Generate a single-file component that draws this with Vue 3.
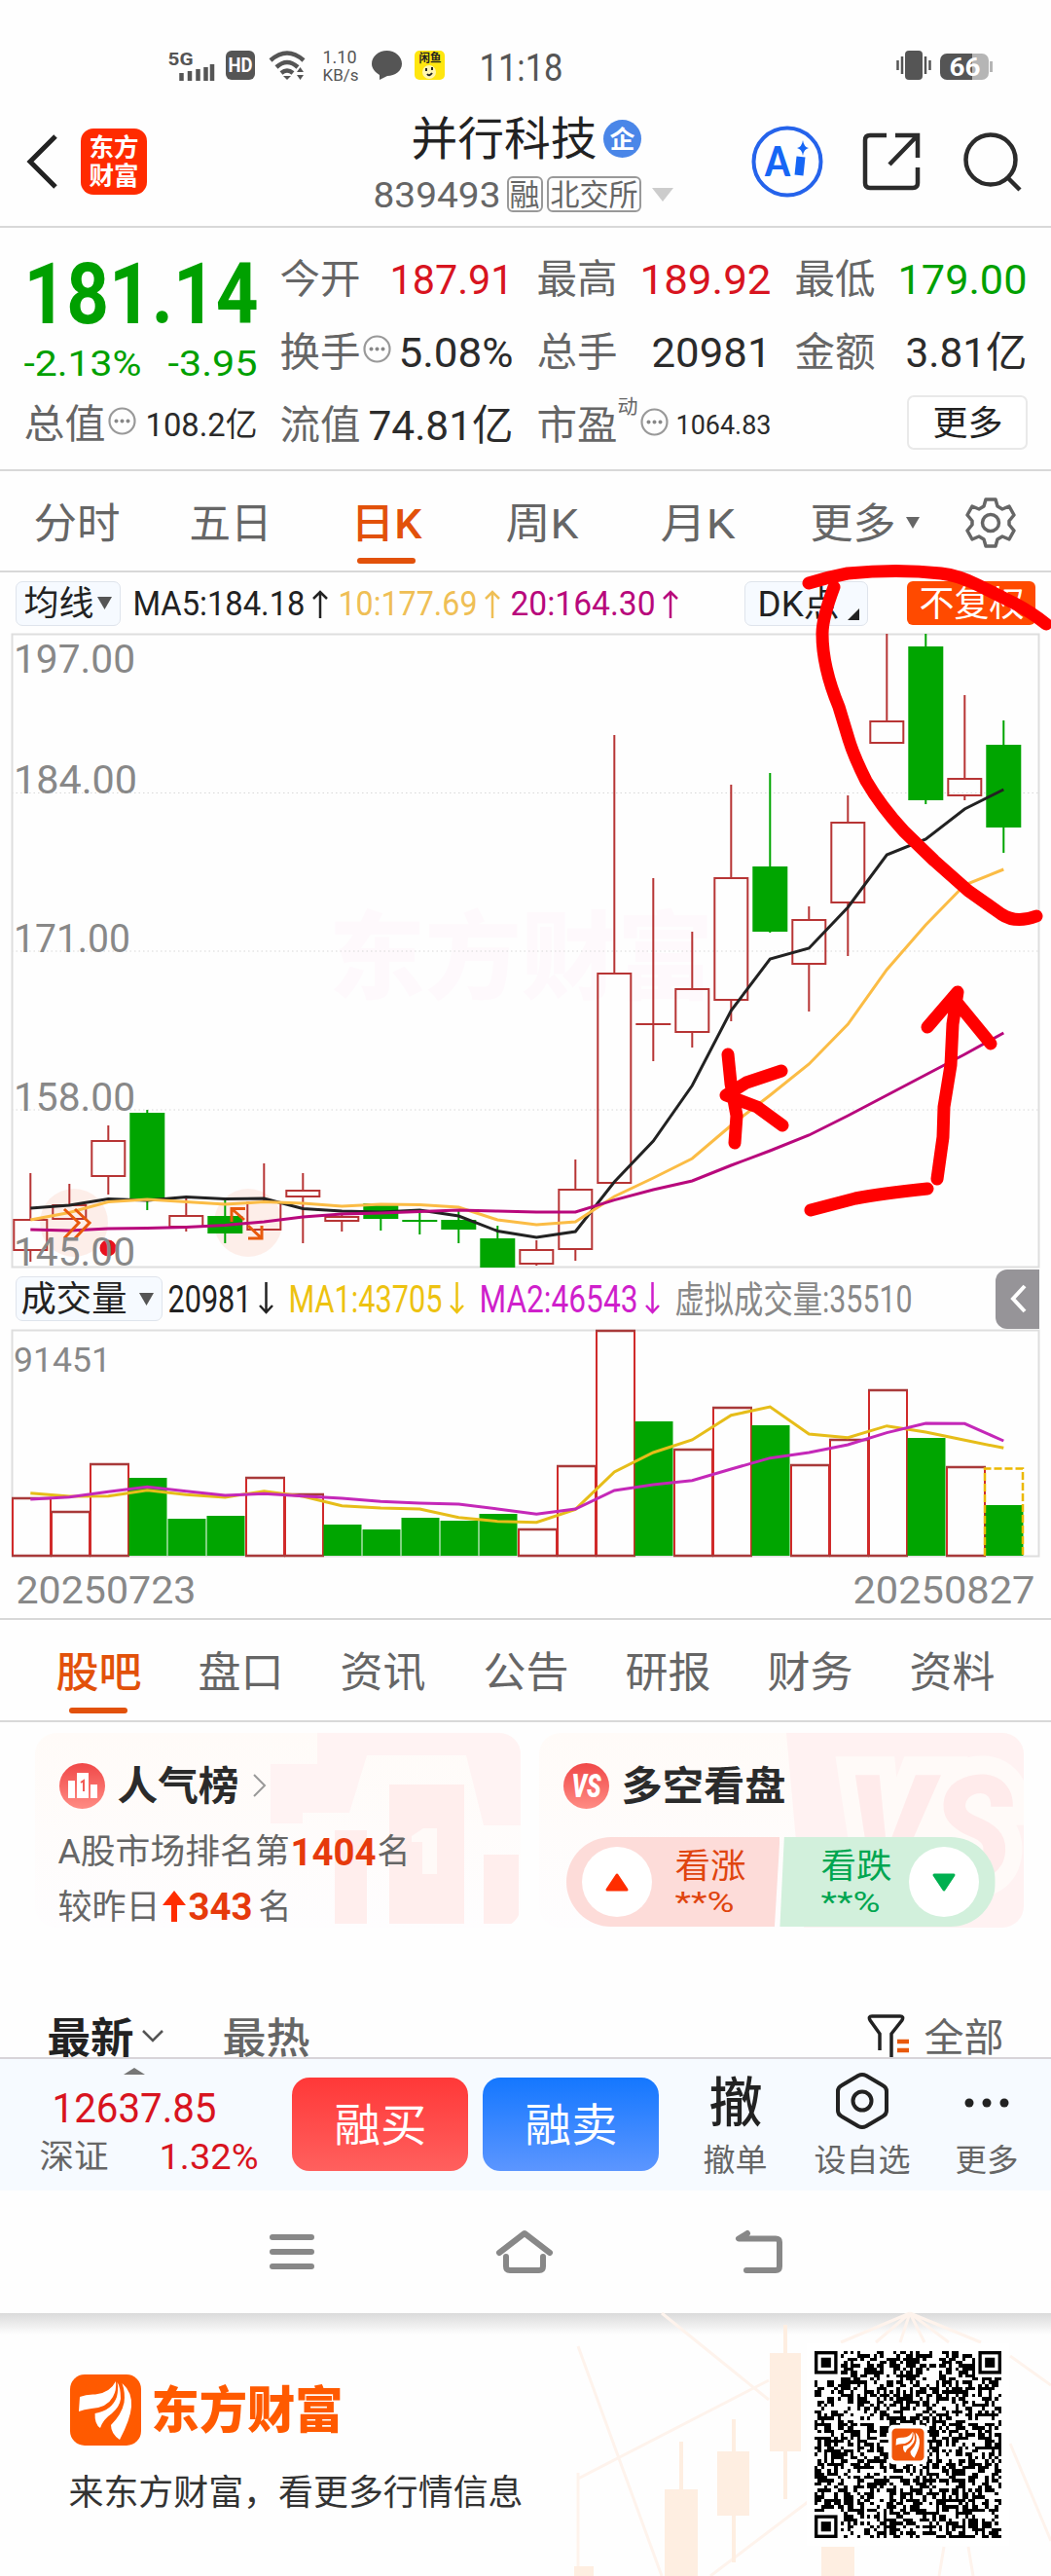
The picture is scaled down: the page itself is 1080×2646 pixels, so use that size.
<template>
    <div class="screen">
        <!-- Phone status bar -->
        <div class="status">
            <div class="signal">
                <fit-text class="bold" text="5G" :w="23" :s="18" />
                <svg width="36" height="17"><path d="M2.500 17V9M11 17V7M19.500 17V5M27.500 17V3M34 17V0" stroke="#555" stroke-width="4.500" /></svg>
            </div>
            <div class="hd"><fit-text class="bold" text="HD" :w="22" :s="20" /></div>
            <svg class="wifi" width="38" height="30" fill="none" stroke="#555" stroke-width="4.500">
                <path d="M1 10Q18 -5 35 10M7 17Q18 7 29 17M12 23Q18 18 24 23" />
                <path d="M14 26L18 30L22 26ZM28 22L31.500 17L35 22ZM28 25L31.500 30L35 25Z" fill="#555" stroke="none" />
            </svg>
            <div class="speed">
                <fit-text text="1.10" :w="32" :s="18" />
                <fit-text text="KB/s" :w="34" :s="17" />
            </div>
            <svg class="bubble" width="31" height="30"><path d="M15.500 0C24 0 31 6 31 13.500S24 26 16 26L8 30V25C3 22 0 18 0 13.500C0 6 7 0 15.500 0Z" fill="#555" /></svg>
            <div class="fish">
                <fit-text class="bold" text="闲鱼" :w="20" :s="12" />
                <svg width="31" height="16"><circle cx="15" cy="8" r="7" fill="#fff6b0" /><path d="M12 4V7M18 3V6M13 10Q15 13 18 9" stroke="#222" stroke-width="2" fill="none" /></svg>
            </div>
            <fit-text class="clock" text="11:18" :w="83" :s="38" />
            <svg class="vibrate" width="36" height="30" stroke="#555" stroke-width="2.500"><rect x="9" y="0" width="18" height="30" rx="4" fill="#555" stroke="none" /><path d="M6 6V24M1.500 10V20M30 6V24M34.500 10V20" /></svg>
            <div class="battery"><fit-text class="bold" text="66" :w="29" :s="25" /></div>
        </div>

        <!-- Stock header -->
        <header class="header">
            <svg width="32" height="54" fill="none" stroke="#222" stroke-width="5"><path d="M30 1L4 27L30 53" /></svg>
            <div class="brand">
                <fit-text text="东方" :w="48" :s="26" />
                <fit-text text="财富" :w="48" :s="26" />
            </div>
            <div class="title">
                <div class="name">
                    <fit-text text="并行科技" :w="188" :s="47" />
                    <span class="qi"><fit-text class="bold" text="企" :w="23" :s="25" /></span>
                </div>
                <div class="code">
                    <fit-text text="839493" :w="128" :s="37" />
                    <span class="tag t1"><fit-text text="融" :w="28" :s="31" /></span>
                    <span class="tag t2"><fit-text text="北交所" :w="87" :s="31" /></span>
                    <svg class="drop" width="22" height="14"><path d="M0 0H22L11 14Z" fill="#ccc" /></svg>
                </div>
            </div>
            <svg class="ai" width="74" height="74">
                <circle cx="37" cy="37" r="34.500" fill="none" stroke="#2563eb" stroke-width="4" />
                <text x="14" y="52" font-size="42" textLength="26" lengthAdjust="spacingAndGlyphs" fill="#1666f5" class="ai-text">A</text>
                <path d="M51 32L49 51" stroke="#1666f5" stroke-width="9" />
                <path d="M53 15Q54 22 59 23Q54 24 53 31Q52 24 47 23Q52 22 53 15Z" fill="#1666f5" />
            </svg>
            <svg class="share" width="60" height="60" fill="none" stroke="#2b2b2b" stroke-width="4.500"><path d="M25 3H8Q3 3 3 8V52Q3 57 8 57H52Q57 57 57 52V36M34 3H57V26M56 4L28 33" /></svg>
            <svg class="search" width="60" height="60" fill="none" stroke="#2b2b2b" stroke-width="4.500"><circle cx="28" cy="28" r="25.500" /><path d="M46 47L58 59" /></svg>
        </header>

        <!-- Quote panel -->
        <section class="quote">
            <div class="price">
                <fit-text class="big" text="181.14" :w="238" :s="88" />
                <div class="change">
                    <fit-text text="-2.13%" :w="118" :s="37" />
                    <fit-text text="-3.95" :w="89" :s="37" />
                </div>
                <div class="pair last">
                    <fit-text text="总值" :w="81" :s="41" />
                    <info-dot />
                    <fit-text class="val" text="108.2亿" :w="112" :s="34" />
                </div>
            </div>
            <div class="stats">
                <div v-for="s in stats" :key="s.label" class="pair">
                    <fit-text :text="s.label" :w="80" :s="41" />
                    <fit-text v-if="s.sup" class="sup" :text="s.sup" :w="18" :s="20" />
                    <info-dot v-if="s.dot" />
                    <fit-text class="val" :class="s.color" :text="s.value" :w="s.w" :s="s.size || 43" />
                </div>
                <button class="more-btn"><fit-text text="更多" :w="69" :s="35" /></button>
            </div>
        </section>

        <!-- Period tabs -->
        <nav class="periods">
            <div v-for="(p, i) in periods" :key="p.text" class="period" :class="{ active: i === 2 }">
                <fit-text :text="p.text" :w="p.w" :s="43" />
            </div>
            <svg class="tri" width="14" height="12"><path d="M0 0H14L7 12Z" fill="#666" /></svg>
            <svg class="gear" width="52" height="52" fill="none" stroke="#666" stroke-width="3.500" stroke-linejoin="round">
                <path d="M21 2H31L33 9L38 12L45 9L50 18L45 24V28L50 34L45 43L38 40L33 43L31 50H21L19 43L14 40L7 43L2 34L7 28V24L2 18L7 9L14 12L19 9Z" /><circle cx="26" cy="26" r="8.500" />
            </svg>
        </nav>

        <!-- Moving average legend -->
        <div class="legend">
            <div class="pill"><fit-text text="均线" :w="69" :s="35" /><svg width="15" height="13"><path d="M0 0H15L7.500 13Z" fill="#555" /></svg></div>
            <div v-for="m in averages" :key="m.text" class="ma" :class="m.cls">
                <fit-text :text="m.text" :w="m.w" :s="35" />
                <svg width="16" height="30" fill="none" stroke="currentColor" stroke-width="2.500"><path d="M8 30V3M1 10L8 3L15 10" /></svg>
            </div>
            <div class="pill dk"><fit-text text="DK点" :w="81" :s="36" /><svg width="12" height="12"><path d="M12 0V12H0Z" fill="#222" /></svg></div>
            <div class="fuquan"><fit-text text="不复权" :w="105" :s="36" /></div>
        </div>

        <!-- Candlestick chart -->
        <svg class="chart" width="1080" height="651" viewBox="0 651 1080 651">
            <text class="watermark" x="338" y="1018" textLength="395" lengthAdjust="spacingAndGlyphs">东方财富</text>
            <path d="M12 814.500H1067M12 977H1067M12 1140H1067" stroke="#d8d8d8" stroke-dasharray="1.500 3" />
            <rect x="12.500" y="651.500" width="1055" height="650" fill="none" stroke="#dedede" stroke-width="2" />
            <circle cx="76" cy="1256" r="35" class="halo" />
            <circle cx="255" cy="1256" r="35" class="halo" />
            <g v-for="(c, i) in candles" :key="i" :stroke="c[4] ? '#00a500' : '#b73535'" stroke-width="2">
                <path :d="wick(c, i)" />
                <rect v-if="c[2] > c[1]" :x="cx(i) - 17" :y="c[1]" width="34" :height="c[2] - c[1]" :fill="c[4] ? '#00a500' : 'none'" />
                <path v-else :d="`M${cx(i) - 18} ${c[1]}h36`" />
            </g>
            <polyline v-for="l in maLines" :key="l.color" :points="points(l.ys)" fill="none" :stroke="l.color" stroke-width="3" />
            <g fill="none" stroke="#e8590c" stroke-width="3"><path d="M66 1242L81 1256L66 1272M77 1242L92 1256L77 1272" /><path d="M252 1241.500H238V1255M238 1241.500L251 1253M255 1272H269V1259M255 1259L269 1272" /></g>
            <circle cx="111" cy="1282" r="8.500" fill="#e8121d" />
            <text v-for="a in axis" :key="a.text" class="axis" x="14" :y="a.y" :textLength="a.w" lengthAdjust="spacingAndGlyphs">{{ a.text }}</text>
            <!-- Hand drawn marks -->
            <g class="marker">
                <path d="M831 599Q850 593 871 589Q922 584 967 589Q985 591 1005 601L1043 620Q1060 629 1075 641" />
                <path d="M857 603Q845 635 845 651Q845 685 862 726L872 759Q877 776 890 802Q905 828 929 854L960 884L995 915L1029 939Q1044 949 1065 941" />
                <path d="M748 1083L751 1113L757 1146L755 1174M803 1100L767 1112L746 1125L778 1137L804 1156" />
                <path d="M833 1243L879 1231Q905 1226 953 1221M963 1211L969 1168L970 1137L977 1094L979 1052L984 1019L953 1055M982 1028L1018 1072" />
            </g>
        </svg>

        <!-- Volume legend -->
        <div class="legend vol-legend">
            <div class="pill volp"><fit-text text="成交量" :w="106" :s="36" /><svg width="15" height="13"><path d="M0 0H15L7.500 13Z" fill="#555" /></svg></div>
            <div v-for="m in volumes" :key="m.text" class="ma" :class="m.cls">
                <fit-text :text="m.text" :w="m.w" :s="38" />
                <svg v-if="m.cls !== 'gray'" width="15" height="34" fill="none" stroke="currentColor" stroke-width="2.500"><path d="M7.500 0V31M1 24L7.500 31L14 24" /></svg>
            </div>
            <div class="collapse"><svg width="20" height="30" fill="none" stroke="#fff" stroke-width="4"><path d="M17 2L5 15L17 28" /></svg></div>
        </div>

        <!-- Volume chart -->
        <svg class="chart" width="1080" height="235" viewBox="0 1366 1080 235">
            <rect x="12.500" y="1366.500" width="1055" height="232" fill="none" stroke="#dedede" stroke-width="2" />
            <text class="axis vol-axis" x="14" y="1409" textLength="100" lengthAdjust="spacingAndGlyphs">91451</text>
            <g v-for="(v, i) in bars" :key="i">
                <rect v-if="v[1]" :x="12.500 + 40 * i" :y="v[0]" width="39" :height="1598 - v[0]" fill="#00a500" />
                <template v-else>
                    <rect :x="13 + 40 * i" :y="v[0]" width="39" :height="1598 - v[0]" fill="none" stroke="#d02a2a" stroke-width="2" />
                    <path :d="`M${12 + 40 * i} ${v[0]}h41M${12 + 40 * i} 1598h41`" stroke="#a83a3a" stroke-width="2.500" />
                </template>
            </g>
            <path d="M1012 1598V1508.500H1051V1598" fill="none" stroke="#ecb800" stroke-width="2.500" stroke-dasharray="8 3" />
            <polyline v-for="l in volLines" :key="l.color" :points="points(l.ys.map((y) => 1290 + y / 3))" fill="none" :stroke="l.color" stroke-width="3" />
        </svg>
        <div class="dates">
            <fit-text text="20250723" :w="182" :s="39" />
            <fit-text text="20250827" :w="184" :s="39" />
        </div>

        <!-- Info tabs -->
        <nav class="tabs">
            <div v-for="(t, i) in tabs" :key="t" class="tab" :class="{ active: i === 0 }"><fit-text :text="t" :w="85" :s="43" /></div>
        </nav>

        <!-- Cards -->
        <section class="cards">
            <div class="card">
                <svg class="art" width="260" height="200">
                    <path d="M51 0H260V95H222L204 23H102L84 82H36V93H3V32H51Z" fill="#fff3f3" />
                    <path d="M69 100H102V196H69ZM125 53H202V196H125ZM222 125H258V196H222Z" fill="#ffeeed" />
                    <path d="M148 106L160 98H174V145H159V112H148Z" fill="#fffaf8" />
                </svg>
                <div class="card-head">
                    <span class="round"><svg width="30" height="26" fill="#fff"><path d="M0 8H7V26H0ZM9 0H21V26H9ZM23 12H30V26H23Z" /><path d="M13 10L16 8V19" fill="none" stroke="#f15a55" stroke-width="2" /></svg></span>
                    <fit-text class="bold" text="人气榜" :w="122" :s="41" />
                    <svg class="chev" width="14" height="24" fill="none" stroke="#999" stroke-width="2"><path d="M1 1L12 12L1 23" /></svg>
                </div>
                <div class="line"><fit-text text="A股市场排名第" :w="235" :s="35" /><fit-text class="bold hot" text="1404" :w="85" :s="39" /><fit-text text="名" :w="31" :s="35" /></div>
                <div class="line second"><fit-text text="较昨日" :w="102" :s="35" /><svg class="up" width="24" height="32" fill="#ff2d00"><path d="M12 0L24 15H15V32H9V15H0Z" /></svg><fit-text class="bold hot" text="343" :w="63" :s="38" /><fit-text class="ming" text="名" :w="31" :s="35" /></div>
            </div>
            <div class="card">
                <svg class="art" width="260" height="200"><path d="M16 0H260V200H34Z" fill="#fff2f2" /><text class="art-vs" x="78" y="150" textLength="170" lengthAdjust="spacingAndGlyphs">VS</text></svg>
                <div class="card-head">
                    <span class="round"><fit-text class="vs" text="VS" :w="27" :s="33" /></span>
                    <fit-text class="bold" text="多空看盘" :w="166" :s="41" />
                </div>
                <div class="vote">
                    <div class="side rise"><span class="disc"><svg width="24" height="19"><path d="M12 2L22 17H2Z" fill="#ff2d00" stroke="#ff2d00" stroke-width="3" stroke-linejoin="round" /></svg></span><div class="poll"><fit-text text="看涨" :w="70" :s="35" /><fit-text text="**%" :w="58" :s="30" /></div></div>
                    <div class="side fall"><div class="poll"><fit-text text="看跌" :w="70" :s="35" /><fit-text text="**%" :w="58" :s="30" /></div><span class="disc"><svg width="24" height="19"><path d="M12 17L22 2H2Z" fill="#00b050" stroke="#00b050" stroke-width="3" stroke-linejoin="round" /></svg></span></div>
                </div>
            </div>
        </section>

        <!-- Posts toolbar -->
        <div class="sort">
            <fit-text class="bold dark" text="最新" :w="86" :s="43" />
            <svg class="down" width="22" height="13" fill="none" stroke="#555" stroke-width="2.500"><path d="M1 1L11 11L21 1" /></svg>
            <fit-text class="medium" text="最热" :w="87" :s="43" />
            <svg class="funnel" width="44" height="45" fill="none" stroke="#222" stroke-width="3.500"><path d="M13 37V20L3 6Q1 2 5 2H34Q38 2 36 6L25 20V45" /><path d="M31 28H43M31 37H43" stroke="#e8590c" stroke-width="4.500" /></svg>
            <fit-text text="全部" :w="79" :s="40" />
        </div>

        <!-- Trade bar -->
        <div class="trade">
            <div class="index">
                <svg width="22" height="7"><path d="M11 0L22 7H0Z" fill="#777" /></svg>
                <fit-text class="red" text="12637.85" :w="166" :s="42" />
                <div class="index-row"><fit-text text="深证" :w="68" :s="34" /><fit-text class="red" text="1.32%" :w="99" :s="37" /></div>
            </div>
            <button class="buy"><fit-text text="融买" :w="92" :s="46" /></button>
            <button class="sell"><fit-text text="融卖" :w="92" :s="46" /></button>
            <div class="action a1"><fit-text class="dark medium" text="撤" :w="52" :s="55" /><fit-text text="撤单" :w="63" :s="32" /></div>
            <div class="action a2"><svg width="54" height="60" fill="none" stroke="#222" stroke-width="4" stroke-linejoin="round"><path d="M23 4Q27 2 31 4L48 14Q52 16 52 20V40Q52 44 48 46L31 56Q27 58 23 56L6 46Q2 44 2 40V20Q2 16 6 14Z" /><circle cx="27" cy="30" r="9.500" /></svg><fit-text text="设自选" :w="96" :s="32" /></div>
            <div class="action a3"><svg width="46" height="60" fill="#222"><circle cx="5" cy="32" r="4.500" /><circle cx="23" cy="32" r="4.500" /><circle cx="41" cy="32" r="4.500" /></svg><fit-text text="更多" :w="62" :s="32" /></div>
        </div>

        <!-- System navigation -->
        <div class="sysnav">
            <svg width="46" height="44"><path d="M3 7H43M3 22H43M3 37H43" /></svg>
            <svg width="58" height="44"><path d="M3 23L29 3L55 23M10 27V37Q10 41 14 41H44Q48 41 48 37V27" /></svg>
            <svg width="50" height="44"><path d="M13 3L4 8.500H42Q46 8.500 46 12V37Q46 41 42 41H12" /></svg>
        </div>

        <!-- Share footer -->
        <footer class="footer">
            <svg class="decor" width="500" height="270" viewBox="580 2376 500 270">
                <g fill="none" stroke="#fef3ec" stroke-width="3"><path d="M680 2376L790 2465M594 2546L790 2445M594 2410L680 2646M730 2646L830 2570M935 2376L864 2406M935 2376L900 2406M935 2376L925 2406M935 2376L950 2406M935 2376L975 2406M935 2376L1008 2406M1038 2420L1080 2450M1038 2510L1080 2610M594 2540V2646M970 2616L965 2646M995 2616L1000 2646" /></g>
                <path d="M683 2557H717V2646H683ZM698 2508H702V2557H698ZM737 2518H770V2584H737ZM752 2485H756V2632H752ZM791 2417H823V2518H791ZM805 2388H809V2567H805ZM844 2616H878V2646H844ZM590 2636H610V2646H590Z" fill="#feeee1" />
            </svg>
            <div class="slogan">
                <div class="logo-row">
                    <svg width="73" height="73" viewBox="0 0 73 73"><rect width="73" height="73" rx="15" fill="#ff5a00" /><use href="#plume" /></svg>
                    <fit-text class="logo-text" text="东方财富" :w="194" :s="51" />
                </div>
                <fit-text class="tagline" text="来东方财富，看更多行情信息" :w="464" :s="36" />
            </div>
            <svg class="qr" width="208" height="208" viewBox="-2.375 -2.375 61.750 61.750">
                <defs><g id="plume" fill="#fff"><path d="M9 38L10 23Q17 20 26 20.500Q41 19 47 7Q48 16 44 23Q38 34 22 35Q14 36 9 38Z" /><path d="M48.500 8Q52 13 52 25Q51 33 43 40Q34 46 31 55Q25 51 25.600 40Q43 37 48 23Q50 15 48.500 8Z" /><path d="M53.500 9Q64 18 63 33Q62 46 51 67Q42 61 42 52Q53 41 55.500 29Q57 19 53.500 9Z" /></g></defs>
                <rect x="-2.375" y="-2.375" width="61.750" height="61.750" fill="#fff" />
                <path :d="qrPath" fill="#000" shape-rendering="crispEdges" />
                <g fill="#fff" stroke="#000"><rect v-for="p in finders" :key="p.join()" :x="p[0] + 0.5" :y="p[1] + 0.5" width="6" height="6" /></g>
                <rect v-for="p in finders" :key="'c' + p.join()" :x="p[0] + 2" :y="p[1] + 2" width="3" height="3" />
                <rect x="22.500" y="22.500" width="12" height="12" rx="1.500" fill="#fff" />
                <rect x="23.600" y="23.600" width="9.800" height="9.800" rx="1.300" fill="#f0560a" />
                <use href="#plume" transform="translate(23.600 23.600) scale(.134)" />
            </svg>
        </footer>
    </div>
</template>

<script setup>
import { h } from 'vue';

// Single line of text stretched to an exact width
const FitText = (props) => h('svg', { class: 'fit', width: props.w, height: props.s }, [
    h('text', {
        x: -1.5,
        y: props.s * 0.86,
        'font-size': props.s,
        textLength: Number(props.w) + 3,
        lengthAdjust: 'spacingAndGlyphs',
        fill: 'currentColor',
    }, props.text),
]);
FitText.props = ['text', 'w', 's'];

// Small round hint icon behind a label
const InfoDot = () => h('svg', { class: 'more-dot', width: 29, height: 29 }, [
    h('circle', { cx: 14.5, cy: 14.5, r: 13, fill: 'none', stroke: '#999', 'stroke-width': 2.2 }),
    ...[8.5, 14.5, 20.5].map((x) => h('circle', { cx: x, cy: 14.5, r: 2, fill: '#888' })),
]);

const stats = [
    { label: '今开', value: '187.91', w: 124, color: 'red' },
    { label: '最高', value: '189.92', w: 132, color: 'red' },
    { label: '最低', value: '179.00', w: 130, color: 'green' },
    { label: '换手', value: '5.08%', w: 115, dot: true },
    { label: '总手', value: '20981', w: 120 },
    { label: '金额', value: '3.81亿', w: 122 },
    { label: '流值', value: '74.81亿', w: 146 },
    { label: '市盈', value: '1064.83', w: 95, size: 27, dot: true, sup: '动' },
];

const periods = [
    { text: '分时', w: 86 },
    { text: '五日', w: 82 },
    { text: '日K', w: 70 },
    { text: '周K', w: 72 },
    { text: '月K', w: 74 },
    { text: '更多', w: 85 },
];

const averages = [
    { text: 'MA5:184.18', w: 174, cls: 'black' },
    { text: '10:177.69', w: 140, cls: 'yellow' },
    { text: '20:164.30', w: 146, cls: 'purple' },
];

const volumes = [
    { text: '20981', w: 83, cls: 'black' },
    { text: 'MA1:43705', w: 155, cls: 'gold' },
    { text: 'MA2:46543', w: 160, cls: 'pink' },
    { text: '虚拟成交量:35510', w: 241, cls: 'gray' },
];

const axis = [
    { text: '197.00', y: 691, w: 125 },
    { text: '184.00', y: 815, w: 127 },
    { text: '171.00', y: 978, w: 120 },
    { text: '158.00', y: 1141, w: 125 },
    { text: '145.00', y: 1300, w: 125 },
];

// [high, body top, body bottom, low, falling]
const candles = [
    [1205, 1253, 1284, 1296, 0], [1216, 1238, 1252, 1252, 0], [1156, 1172, 1208, 1227, 0],
    [1140, 1144, 1230, 1243, 1], [1230, 1249, 1260, 1265, 0], [1230, 1250, 1266, 1277, 1],
    [1195, 1235, 1263, 1263, 0], [1205, 1223, 1229, 1277, 0], [1247, 1250, 1254, 1265, 0],
    [1236, 1237, 1251, 1264, 1], [1246, 1254, 1254, 1268, 1], [1243, 1254, 1262, 1277, 1],
    [1259, 1273, 1301, 1301, 1], [1274, 1284, 1298, 1300, 0], [1191, 1222, 1283, 1295, 0],
    [755, 1000, 1215, 1215, 0], [902, 1052, 1052, 1090, 0], [957, 1016, 1060, 1076, 0],
    [806, 902, 1027, 1049, 0], [794, 891, 956, 958, 1], [931, 945, 990, 1039, 0],
    [817, 845, 927, 982, 0], [651, 741, 763, 763, 0], [651, 665, 821, 826, 1],
    [714, 800, 817, 822, 0], [740, 766, 849, 876, 1],
];

const maLines = [
    { color: '#222', ys: [1241, 1238, 1231.6, 1233, 1229.4, 1231.6, 1231, 1241.5, 1244, 1245, 1243, 1249, 1264.5, 1271, 1265, 1214, 1172, 1115, 1038, 985, 974, 932, 878, 862, 831, 811] },
    { color: '#fbbc45', ys: [1253, 1245.5, 1234.6, 1232, 1234.6, 1237, 1234.6, 1236, 1239, 1237, 1237.6, 1240, 1253, 1258, 1255, 1229, 1210, 1190, 1156, 1125, 1093, 1052, 996, 950, 909, 893] },
    { color: '#b8087c', ys: [1263, 1264, 1262, 1261.5, 1260.6, 1258.5, 1255, 1250, 1247, 1246, 1244.6, 1243, 1244, 1245, 1245, 1232.6, 1222, 1213, 1197, 1182, 1166, 1146, 1125, 1104, 1083, 1061] },
];

// [top, falling]
const bars = [
    [1539, 0], [1553, 0], [1504, 0], [1518, 1], [1560, 1], [1557, 1], [1518, 0], [1535, 0], [1566, 1],
    [1571, 1], [1559, 1], [1562, 1], [1555, 1], [1571, 0], [1506, 0], [1367, 0], [1460, 1], [1489, 0],
    [1446, 0], [1464, 1], [1505, 0], [1479, 0], [1428, 0], [1477, 1], [1507, 0], [1546, 1],
];

const volLines = [
    { color: '#e6bd19', ys: [731, 741, 740, 722, 736, 744, 725, 741, 770, 777, 780, 806, 818, 821, 781, 666, 606, 567, 491, 465, 549, 560, 524, 543, 568, 592] },
    { color: '#c428b8', ys: [750, 743, 727, 712, 725, 738, 733, 740, 747, 757, 762, 765, 780, 796, 780, 723, 705, 692, 657, 623, 606, 582, 545, 516, 517, 570] },
];

const tabs = ['股吧', '盘口', '资讯', '公告', '研报', '财务', '资料'];

const cx = (i) => 31.3 + i * 40;
const points = (ys) => ys.map((y, i) => `${cx(i)},${y}`).join(' ');
const wick = (c, i) => `M${cx(i)} ${c[0]}V${c[1]}M${cx(i)} ${c[2]}V${c[3]}`;

// QR code: 57 x 57 modules, finder areas left empty
const finders = [[0, 0], [50, 0], [0, 50]];
let seed = 20250827;
const next = () => {
    seed = (seed * 1103515245 + 12345) % 2147483648;
    return seed / 2147483648;
};
let qrPath = '';
for (let y = 0; y < 57; y++) {
    for (let x = 0; x < 57; x++) {
        const on = next() > 0.49;
        const corner = (x < 8 && (y < 8 || y > 48)) || (x > 48 && y < 8);
        if (on && !corner) qrPath += `M${x} ${y}h1v1h-1z`;
    }
}
</script>

<style>
body {
    background: #fff;
}
</style>

<style scoped>
.screen {
    width: 1080px;
    height: 2646px;
    overflow: hidden;
    background: #fefefe;
    color: #666;
    font-family: Roboto, "Noto Sans CJK SC", sans-serif;
}

.screen * {
    box-sizing: border-box;
}

svg {
    display: block;
    flex: none;
    overflow: visible;
}

button {
    padding: 0;
    border: 0;
    font: inherit;
}

.bold {
    font-weight: 700;
}

.medium {
    font-weight: 500;
}

.dark {
    color: #222;
}

/* status bar */
.status {
    display: flex;
    align-items: flex-start;
    height: 100px;
    padding: 52px 0 0 174px;
    color: #555;
}

.signal {
    width: 58px;
}

.signal svg:last-child {
    margin: -4px 0 0 10px;
}

.hd {
    display: flex;
    align-items: center;
    justify-content: center;
    width: 30px;
    height: 30px;
    border-radius: 6px;
    background: #555;
    color: #fff;
}

.wifi {
    margin-left: 15px;
}

.speed {
    width: 35px;
    margin: -2px 0 0 18px;
}

.bubble {
    margin-left: 14px;
}

.fish {
    display: flex;
    flex-direction: column;
    align-items: center;
    width: 31px;
    height: 30px;
    margin-left: 13px;
    padding-top: 2px;
    border-radius: 5px;
    background: #ffe60f;
    color: #222;
}

.clock {
    margin: -2px 0 0 37px;
}

.vibrate {
    margin-left: 344px;
}

.battery {
    display: flex;
    align-items: center;
    justify-content: center;
    width: 50px;
    height: 27px;
    margin: 3px 0 0 9px;
    border-radius: 7px;
    background: linear-gradient(90deg, #555 66%, #b5b5b5 66%);
    color: #fff;
}

.battery::after {
    content: "";
    width: 3px;
    height: 11px;
    margin-right: -14px;
    margin-left: 11px;
    background: #b5b5b5;
}

/* header */
.header {
    display: flex;
    align-items: center;
    height: 134px;
    padding-left: 27px;
    border-bottom: 2px solid #d8d8d8;
}

.brand {
    display: flex;
    flex-direction: column;
    align-items: center;
    justify-content: center;
    gap: 3px;
    width: 68px;
    height: 68px;
    margin-left: 24px;
    border-radius: 13px;
    background: #ff2b00;
    color: #fff;
    font-weight: 700;
}

.title {
    width: 307px;
    margin: 5px 0 0 234px;
}

.name {
    display: flex;
    align-items: center;
    gap: 8px;
    padding-left: 39px;
    color: #222;
}

.qi {
    display: flex;
    align-items: center;
    justify-content: center;
    width: 39px;
    height: 39px;
    border-radius: 50%;
    background: #4a86e8;
    color: #fff;
}

.code {
    display: flex;
    align-items: center;
    margin-top: 15px;
}

.tag {
    display: flex;
    align-items: center;
    justify-content: center;
    height: 37px;
    border: 2px solid #999;
    border-radius: 6px;
}

.t1 {
    width: 37px;
    margin-left: 8px;
}

.t2 {
    width: 98px;
    margin-left: 4px;
}

.drop {
    margin-left: 11px;
}

.ai {
    margin-left: 80px;
}

.ai-text {
    font-family: Lato, sans-serif;
    font-weight: 900;
}

.share {
    margin-left: 40px;
}

.search {
    margin-left: 44px;
}

/* quote */
.quote {
    display: flex;
    height: 250px;
    padding: 0 25px 0 26px;
    border-bottom: 2px solid #d8d8d8;
}

.price {
    width: 263px;
    padding-top: 22px;
    color: #00a000;
}

.big {
    font-weight: 700;
}

.change {
    display: flex;
    justify-content: space-between;
    width: 237px;
    margin-top: 10px;
}

.pair {
    display: flex;
    align-items: center;
    height: 75px;
    color: #666;
}

.pair .val {
    margin-left: auto;
    color: #2b2b2b;
}

.pair .val.red,
.red {
    color: #d8141f;
}

.pair .val.green {
    color: #00a000;
}

.last {
    width: 237px;
    margin-top: 7px;
}

.more-dot {
    margin: -6px 0 0 4px;
}

.sup {
    margin: -38px 0 0 3px;
}

.stats {
    display: grid;
    grid-template-columns: 237px 238px 236px;
    column-gap: 27px;
    grid-template-rows: repeat(3, 75px);
    padding-top: 15px;
}

.more-btn {
    display: flex;
    align-items: center;
    justify-content: center;
    width: 124px;
    height: 56px;
    margin: 7px -2px 0 auto;
    border: 2px solid #e9e9e9;
    border-radius: 7px;
    background: #fff;
    color: #222;
}

/* period tabs */
.periods {
    display: flex;
    align-items: center;
    height: 104px;
    padding: 4px 36px 0 0;
    border-bottom: 2px solid #d8d8d8;
}

.period {
    display: flex;
    align-items: center;
    justify-content: center;
    position: relative;
    width: 160px;
    height: 100%;
}

.period:first-child {
    width: 157px;
}

.period:nth-child(6) {
    width: 85px;
    margin-left: 37px;
}

.active {
    color: #e2510a;
    font-weight: 500;
}

.active::after {
    content: "";
    position: absolute;
    bottom: 7px;
    width: 60px;
    height: 6px;
    border-radius: 3px;
    background: #e2510a;
}

.tri {
    margin-left: 12px;
}

.gear {
    margin-left: auto;
}

/* legends */
.legend {
    display: flex;
    align-items: center;
    height: 63px;
    padding-left: 16px;
}

.pill {
    display: flex;
    align-items: center;
    gap: 5px;
    width: 108px;
    height: 46px;
    margin-right: 14px;
    padding-left: 9px;
    border: 1px solid #dfe4ec;
    border-radius: 7px;
    background: #f6faff;
    color: #222;
}

.ma {
    display: flex;
    align-items: center;
    gap: 9px;
    margin-right: 12px;
}

.black {
    color: #222;
}

.yellow {
    color: #efbf55;
}

.purple {
    color: #b8087c;
}

.gold {
    color: #edc210;
}

.pink {
    color: #cf1fcb;
}

.gray {
    color: #888;
}

.dk {
    gap: 10px;
    width: 127px;
    margin: 0 0 0 56px;
    padding-left: 14px;
}

.dk svg:last-child {
    margin-top: 22px;
}

.fuquan {
    display: flex;
    align-items: center;
    justify-content: center;
    width: 132px;
    height: 45px;
    margin-left: 40px;
    border-radius: 6px;
    background: #ff4a00;
    color: #fff;
}

.vol-legend {
    height: 64px;
}

.vol-legend .pill {
    gap: 14px;
    width: 151px;
    margin-right: 7px;
    padding-left: 6px;
}

.vol-legend .ma {
    margin-right: 17px;
}

.collapse {
    display: flex;
    align-items: center;
    justify-content: center;
    width: 45px;
    height: 61px;
    margin: 0 12px 0 auto;
    border-radius: 12px 0 0 12px;
    background: #969498;
}

/* charts */
.axis {
    font-size: 40px;
    fill: #888;
}

.vol-axis {
    font-size: 35px;
}

.watermark {
    font-size: 98px;
    font-weight: 900;
    fill: #fef9fc;
}

.halo {
    fill: #fdeae4;
    opacity: 0.8;
}

.marker {
    fill: none;
    stroke: #f00;
    stroke-width: 13px;
    stroke-linecap: round;
    stroke-linejoin: round;
}

.dates {
    display: flex;
    align-items: center;
    justify-content: space-between;
    height: 63px;
    padding: 2px 18px 0;
    border-bottom: 2px solid #d8d8d8;
    color: #888;
}

/* info tabs */
.tabs {
    display: flex;
    height: 105px;
    padding: 3px 0 0 28px;
    border-bottom: 2px solid #d8d8d8;
}

.tab {
    display: flex;
    align-items: center;
    justify-content: center;
    position: relative;
    width: 146.3px;
}

/* cards */
.cards {
    display: flex;
    gap: 19px;
    height: 270px;
    padding: 11px 28px 0 36px;
}

.card {
    position: relative;
    width: 499px;
    height: 200px;
    padding: 30px 0 0 25px;
    overflow: hidden;
    border-radius: 22px;
    background: linear-gradient(#fffbf8, #fefdfe);
}

.art {
    position: absolute;
    top: 0;
    right: 0;
}

.art-vs {
    font-size: 150px;
    font-weight: 900;
    font-style: italic;
    fill: #ffebeb;
    stroke: #fffaf8;
    stroke-width: 38px;
    paint-order: stroke;
}

.card-head {
    display: flex;
    align-items: center;
    position: relative;
    gap: 14px;
    height: 48px;
    color: #2b2b2b;
}

.round {
    display: flex;
    align-items: center;
    justify-content: center;
    width: 47px;
    height: 47px;
    border-radius: 50%;
    background: linear-gradient(#f04848, #ff8c84);
    color: #fff;
}

.vs {
    font-weight: 900;
    font-style: italic;
}

.chev {
    margin-left: 2px;
}

.line {
    display: flex;
    align-items: center;
    position: relative;
    gap: 4px;
    height: 48px;
    margin-top: 19px;
}

.second {
    margin-top: 9px;
}

.hot {
    color: #e63a0c;
}

.ming {
    margin-left: 5px;
}

.vote {
    display: flex;
    position: relative;
    width: 441px;
    height: 92px;
    margin: 29px 0 0 3px;
}

.side {
    display: flex;
    align-items: center;
    gap: 25px;
}

.poll {
    display: flex;
    flex-direction: column;
    gap: 4px;
}

.rise {
    width: 221px;
    padding-left: 16px;
    border-radius: 46px 0 0 46px;
    background: #fddcd9;
    color: #e0450f;
    clip-path: polygon(0 0, 100% 0, 97.5% 100%, 0 100%);
}

.fall {
    width: 222px;
    gap: 19px;
    padding-left: 44px;
    border-radius: 0 46px 46px 0;
    background: #d2f0dc;
    color: #00a651;
    clip-path: polygon(2% 0, 100% 0, 100% 100%, 0 100%);
}

.disc {
    display: flex;
    align-items: center;
    justify-content: center;
    width: 72px;
    height: 72px;
    border-radius: 50%;
    background: #fff;
}

/* posts toolbar */
.sort {
    display: flex;
    align-items: center;
    height: 76px;
    padding: 34px 50px 0 50px;
    overflow: hidden;
    border-bottom: 2px solid #d8d4d8;
}

.down {
    margin: -4px 62px 0 10px;
}

.funnel {
    margin: -4px 16px 0 auto;
}

/* trade bar */
.trade {
    display: flex;
    height: 135px;
    background: #f6faff;
}

.index {
    display: flex;
    flex-direction: column;
    align-items: center;
    width: 300px;
    padding: 9px 24px 0 0;
}

.index .red {
    margin-top: 13px;
}

.index-row {
    display: flex;
    align-items: center;
    justify-content: space-between;
    width: 222px;
    margin: 10px -30px 0 0;
}

.index-row .red {
    margin-top: 0;
}

.buy,
.sell {
    display: flex;
    align-items: center;
    justify-content: center;
    width: 181px;
    height: 96px;
    margin-top: 19px;
    border-radius: 18px;
    background: linear-gradient(#ff3838, #ff605e);
    color: #fff;
}

.sell {
    margin-left: 15px;
    background: linear-gradient(#1477ff, #5c96ff);
}

.action {
    display: flex;
    flex-direction: column;
    align-items: center;
    justify-content: space-between;
    height: 106px;
    margin-top: 13px;
}

.action .fit:first-child {
    margin-top: 4px;
}

.a1 {
    margin-left: 47px;
}

.a2 {
    margin-left: 51px;
}

.a3 {
    margin-left: 49px;
}

/* system navigation */
.sysnav {
    display: flex;
    align-items: center;
    gap: 187px;
    height: 126px;
    padding-left: 277px;
    fill: none;
    stroke: #888;
    stroke-width: 6px;
    stroke-linecap: round;
    stroke-linejoin: round;
}

/* footer */
.footer {
    display: flex;
    justify-content: space-between;
    position: relative;
    height: 270px;
    padding: 31px 43px 0 72px;
    background: linear-gradient(#dadada, #fefefe 22px);
}

.decor {
    position: absolute;
    top: 0;
    right: 0;
}

.slogan {
    padding-top: 32px;
}

.logo-row {
    display: flex;
    align-items: center;
    gap: 12px;
    margin-bottom: 30px;
    color: #ff5a00;
}

.logo-text {
    font-weight: 900;
}

.tagline {
    color: #333;
}

.qr {
    position: relative;
}
</style>
